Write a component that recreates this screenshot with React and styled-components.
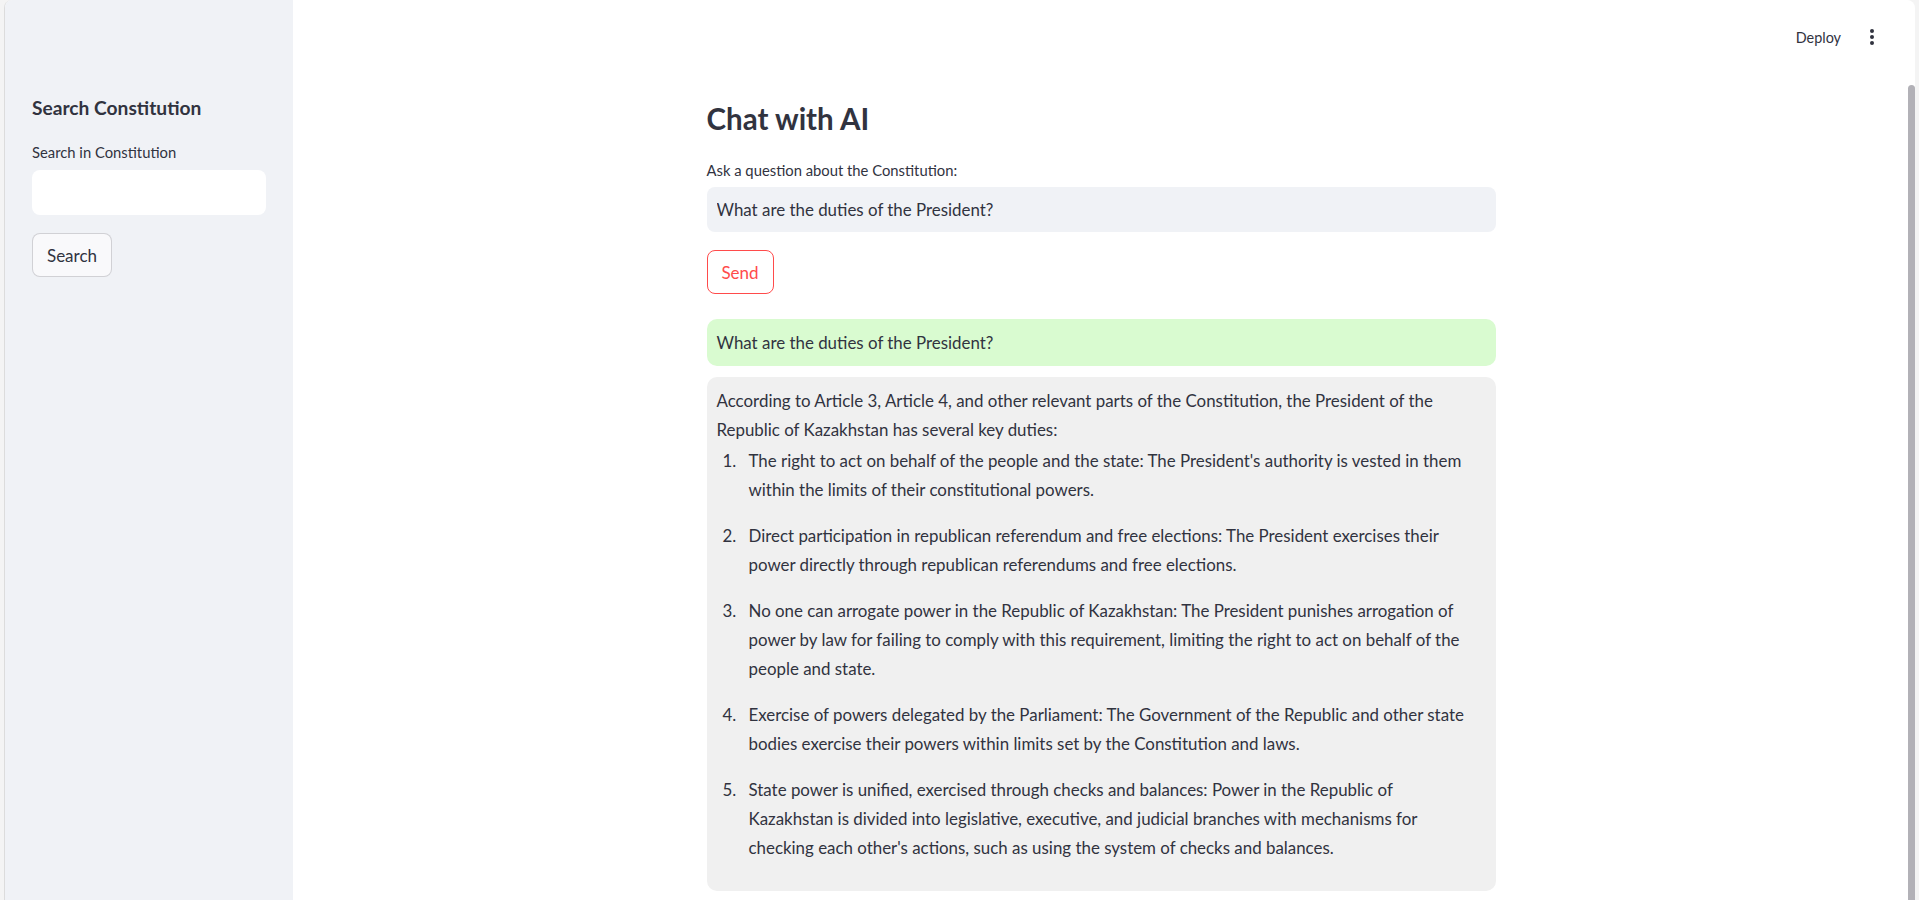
import React from 'react';
import styled, { createGlobalStyle } from 'styled-components';

const GlobalStyle = createGlobalStyle`
  html, body {
    margin: 0;
    padding: 0;
  }
  body {
    background: #f4f4f4;
    font-family: Lato, "Liberation Sans", sans-serif;
    color: #31333f;
    overflow: hidden;
  }
  * {
    box-sizing: border-box;
  }
`;

const Frame = styled.div`
  display: flex;
  height: 900px;
  margin: 0 4px;
  background: #fff;
  border-left: 1px solid #dcdcdc;
  border-radius: 8px 8px 0 0;
  overflow: hidden;
`;

const Sidebar = styled.aside`
  flex: 0 0 288px;
  display: flex;
  flex-direction: column;
  padding: 96px 27px 0;
  background: #f0f2f6;
`;

const SideTitle = styled.h3`
  margin: 0 0 21px;
  font-size: 19.2px;
  line-height: 24px;
  font-weight: 700;
`;

const Label = styled.label`
  display: block;
  font-size: 14.8px;
  line-height: 22px;
  margin-bottom: ${p => p.gap || 6}px;
`;

const TextInput = styled.input`
  display: block;
  width: 100%;
  height: 45px;
  padding: 0 10px;
  border: none;
  border-radius: 8px;
  outline: none;
  background: ${p => p.filled ? '#f0f2f6' : '#fff'};
  color: #31333f;
  font-family: inherit;
  font-size: 16.9px;
`;

const Button = styled.button`
  align-self: flex-start;
  width: ${p => p.w}px;
  height: 44px;
  padding: 0;
  margin-top: ${p => p.top}px;
  border: 1px solid ${p => p.primary ? '#ff4b4b' : 'rgba(49, 51, 63, 0.2)'};
  border-radius: 8px;
  background: ${p => p.primary ? '#fff' : '#f9f9fb'};
  color: ${p => p.primary ? '#ff4b4b' : '#31333f'};
  font-family: inherit;
  font-size: 17px;
  font-weight: 400;
  cursor: pointer;
`;

const Main = styled.main`
  flex: 1;
  display: flex;
  flex-direction: column;
  min-width: 0;
`;

const Header = styled.header`
  flex: 0 0 74px;
  display: flex;
  align-items: center;
  justify-content: flex-end;
  gap: 28px;
  padding-right: 31px;
`;

const DeployLink = styled.span`
  font-size: 14.4px;
  color: #31333f;
`;

const MenuButton = styled.span`
  display: flex;
  align-items: center;
`;

const Content = styled.section`
  width: 792px;
  margin: 0 auto;
  padding: 26px 0 0 3px;
  display: flex;
  flex-direction: column;
`;

const Title = styled.h1`
  margin: 0 0 21px;
  font-size: 29.5px;
  line-height: 38px;
  font-weight: 700;
`;

const Bubble = styled.div`
  padding: ${p => p.answer ? '9px 20px 12px 10px' : '9px 10px'};
  margin-top: ${p => p.top}px;
  border-radius: 10px;
  background: ${p => p.answer ? '#f0f0f0' : '#d9fbd0'};
  font-size: 16.9px;
  line-height: 29px;
`;

const Para = styled.p`
  margin: 0 0 2px;
`;

const Steps = styled.ol`
  margin: 0;
  padding-left: 24px;
`;

const Step = styled.li`
  margin-bottom: 17px;
  padding-left: 8px;
`;

const Scrollbar = styled.div`
  flex: 0 0 9px;
  padding: 85px 0 0 2px;
`;

const Thumb = styled.div`
  width: 7px;
  height: 100%;
  border-radius: 4px 4px 0 0;
  background: #b2b1b7;
`;

const KebabIcon = () => (
  <svg width="6" height="18" viewBox="0 0 6 18">
    <circle cx="3" cy="3" r="2" fill="#31333f" />
    <circle cx="3" cy="9" r="2" fill="#31333f" />
    <circle cx="3" cy="15" r="2" fill="#31333f" />
  </svg>
);

const duties = [
  "The right to act on behalf of the people and the state: The President's authority is vested in them within the limits of their constitutional powers.",
  "Direct participation in republican referendum and free elections: The President exercises their power directly through republican referendums and free elections.",
  "No one can arrogate power in the Republic of Kazakhstan: The President punishes arrogation of power by law for failing to comply with this requirement, limiting the right to act on behalf of the people and state.",
  "Exercise of powers delegated by the Parliament: The Government of the Republic and other state bodies exercise their powers within limits set by the Constitution and laws.",
  "State power is unified, exercised through checks and balances: Power in the Republic of Kazakhstan is divided into legislative, executive, and judicial branches with mechanisms for checking each other's actions, such as using the system of checks and balances.",
];

const App = () => {
  const question = 'What are the duties of the President?';
  return (
    <>
      <GlobalStyle />
      <Frame>
        <Sidebar>
          <SideTitle>Search Constitution</SideTitle>
          <Label gap={7}>Search in Constitution</Label>
          <TextInput />
          <Button w={80} top={18}>Search</Button>
        </Sidebar>
        <Main>
          <Header>
            <DeployLink>Deploy</DeployLink>
            <MenuButton><KebabIcon /></MenuButton>
          </Header>
          <Content>
            <Title>Chat with AI</Title>
            <Label>Ask a question about the Constitution:</Label>
            <TextInput filled defaultValue={question} />
            <Button primary w={67} top={18}>Send</Button>
            <Bubble top={25}>{question}</Bubble>
            <Bubble answer top={11}>
              <Para>
                According to Article 3, Article 4, and other relevant parts of the Constitution, the President of the Republic of Kazakhstan has several key duties:
              </Para>
              <Steps>
                {duties.map((text) => (
                  <Step key={text}>{text}</Step>
                ))}
              </Steps>
            </Bubble>
          </Content>
        </Main>
        <Scrollbar>
          <Thumb />
        </Scrollbar>
      </Frame>
    </>
  );
};

export default App;
